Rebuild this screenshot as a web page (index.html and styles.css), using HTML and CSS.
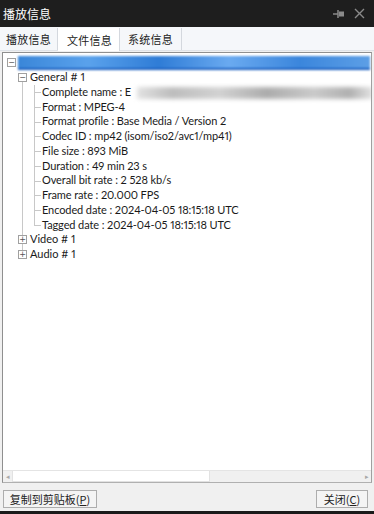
FILE: index.html
```html
<!DOCTYPE html>
<html lang="zh">
<head>
    <meta charset="UTF-8">
    <title>播放信息</title>
    <link rel="stylesheet" href="styles.css">
</head>
<body>
    <div class="window">
        <div class="titlebar">
            <span class="title">播放信息</span>
            <span class="title-icons">
                <svg width="12" height="10" viewBox="0 0 12 10"><path d="M0 5h5" stroke="#8a8a8a" stroke-width="1.5"/><path d="M5 1v8" stroke="#8a8a8a" stroke-width="1.5"/><rect x="6" y="2.5" width="5" height="5" fill="#8a8a8a"/></svg>
                <svg width="11" height="11" viewBox="0 0 11 11"><path d="M1 1l9 9M10 1l-9 9" stroke="#8a8a8a" stroke-width="1.4"/></svg>
            </span>
        </div>

        <div class="tabs">
            <button class="tab">播放信息</button>
            <button class="tab active">文件信息</button>
            <button class="tab">系统信息</button>
        </div>

        <div class="panel">
            <div class="tree">
                <div class="row root">
                    <span class="box">−</span>
                    <span class="blur-blue"></span>
                </div>
                <div class="branch">
                    <div class="row l1 first">
                        <span class="box">−</span>
                        <span class="label">General # 1</span>
                    </div>
                    <ul class="leaves">
                        <li>Complete name : E<span class="blur-gray"></span></li>
                        <li>Format : MPEG-4</li>
                        <li>Format profile : Base Media / Version 2</li>
                        <li>Codec ID : mp42 (isom/iso2/avc1/mp41)</li>
                        <li>File size : 893 MiB</li>
                        <li>Duration : 49 min 23 s</li>
                        <li>Overall bit rate : 2 528 kb/s</li>
                        <li>Frame rate : 20.000 FPS</li>
                        <li>Encoded date : 2024-04-05 18:15:18 UTC</li>
                        <li>Tagged date : 2024-04-05 18:15:18 UTC</li>
                    </ul>
                    <div class="row l1">
                        <span class="box">+</span>
                        <span class="label">Video # 1</span>
                    </div>
                    <div class="row l1 last">
                        <span class="box">+</span>
                        <span class="label">Audio # 1</span>
                    </div>
                </div>
            </div>
            <div class="hscroll">
                <span class="arrow">&#9666;</span>
                <span class="thumb"></span>
                <span class="track"></span>
                <span class="arrow">&#9656;</span>
            </div>
        </div>

        <div class="footer">
            <button class="btn">复制到剪贴板(<u>P</u>)</button>
            <button class="btn close">关闭(<u>C</u>)</button>
        </div>
    </div>
</body>
</html>
```
FILE: styles.css
```css
body {
    margin: 0;
    font-family: Lato, "Noto Sans CJK SC", sans-serif;
    font-size: 11px;
    font-feature-settings: "pnum";
    background: #1a1a1a;
}

.window {
    width: 374px;
    height: 511px;
    background: #f0f0f0;
    display: flex;
    flex-direction: column;
    overflow: hidden;
}

.titlebar {
    height: 27px;
    flex: none;
    background: #1e1e1e;
    color: #fff;
    display: flex;
    align-items: center;
    justify-content: space-between;
    padding: 0 9px 0 3px;
    font-size: 12px;
    font-family: "Noto Sans CJK SC", sans-serif;
}

.title-icons {
    display: flex;
    gap: 9px;
    align-items: center;
}

.tabs {
    height: 23px;
    flex: none;
    display: flex;
    align-items: flex-end;
    background: #f5f7fa;
    border-bottom: 1px solid #dfe3e8;
}

.tab {
    width: 58px;
    height: 22px;
    padding: 0;
    border: none;
    border-right: 1px solid #d4d8de;
    background: #f5f7fa;
    font-family: "Noto Sans CJK SC", sans-serif;
    font-size: 11px;
    letter-spacing: 0.3px;
    color: #222;
}

.tab.active {
    width: 62px;
    height: 23px;
    background: #fff;
    margin-bottom: -1px;
    padding-left: 2px;
}

.tab:last-child {
    width: 62px;
}

.panel {
    flex: 1;
    margin: 1px 2px 0 2px;
    border: 1px solid #8f8f8f;
    border-right-color: #a0a0a0;
    border-bottom-color: #b0b0b0;
    background: #fff;
    display: flex;
    flex-direction: column;
}

.tree {
    flex: 1;
    padding: 2px 0 0 4px;
    color: #1a1a1a;
    line-height: 14.75px;
    overflow: hidden;
}

.row {
    display: flex;
    align-items: center;
    height: 14.75px;
    position: relative;
}

.root {
    height: 15px;
}

.box {
    width: 7px;
    height: 7px;
    border: 1px solid #a0a0a0;
    font-family: "DejaVu Sans", sans-serif;
    font-size: 8px;
    line-height: 7px;
    text-align: center;
    color: #555;
    margin-right: 3px;
    background: #fff;
    flex: none;
    position: relative;
    z-index: 1;
}

.blur-blue {
    flex: 1;
    height: 12px;
    margin: 0 1px 0 -1px;
    background: linear-gradient(90deg, #3a86d8, #5aa2ec 20%, #2f7cd6 40%, #6aaaf0 60%, #3b86dc 80%, #5d9fe6);
    filter: blur(1px);
    border-bottom: 2px solid #1b5fbf;
}

.branch {
    margin-left: 11px;
}

.l1::before {
    content: "";
    position: absolute;
    left: 4px;
    top: 0;
    bottom: 0;
    border-left: 1px solid #c8c8c8;
}

.l1.first::before {
    top: 50%;
}

.l1.last::before {
    bottom: 50%;
}

.leaves {
    list-style: none;
    margin: 0 0 0 4px;
    padding: 0;
    border-left: 1px solid #c8c8c8;
}

.leaves li {
    position: relative;
    height: 14.75px;
    padding-left: 19px;
    white-space: nowrap;
    letter-spacing: -0.1px;
}

.leaves li::before {
    content: "";
    position: absolute;
    left: 11px;
    top: 0;
    bottom: 0;
    border-left: 1px solid #c8c8c8;
}

.leaves li:last-child::before {
    bottom: 50%;
}

.leaves li::after {
    content: "";
    position: absolute;
    left: 11px;
    top: 50%;
    width: 7px;
    border-top: 1px solid #c8c8c8;
}

.blur-gray {
    display: inline-block;
    vertical-align: middle;
    width: 236px;
    height: 12px;
    margin-left: 6px;
    background: linear-gradient(90deg, #e2e2e2, #bdbdbd 15%, #d2d2d2 35%, #acacac 55%, #cacaca 75%, #b0b0b0 90%, #e4e4e4);
    filter: blur(2px);
}

.hscroll {
    height: 11px;
    flex: none;
    display: flex;
    background: #f0f0f0;
    border-top: 1px solid #e4e4e4;
}

.arrow {
    width: 9px;
    font-size: 7px;
    line-height: 11px;
    color: #a8a8a8;
    text-align: center;
}

.thumb {
    width: 196px;
    background: #fff;
    border: 1px solid #e2e2e2;
    border-top: none;
}

.track {
    flex: 1;
}

.footer {
    height: 28px;
    flex: none;
    display: flex;
    justify-content: space-between;
    align-items: flex-start;
    padding: 7px 6px 0 3px;
    box-sizing: border-box;
}

.btn {
    width: 94px;
    height: 18px;
    padding: 0;
    border: 1px solid #adadad;
    background: #f4f4f4;
    font-family: "Noto Sans CJK SC", sans-serif;
    font-size: 11px;
    line-height: 16px;
    color: #222;
}

.btn.close {
    width: 52px;
}
```
